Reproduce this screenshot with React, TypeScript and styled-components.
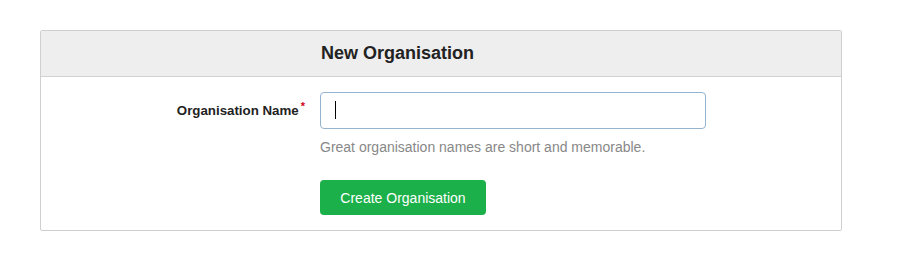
import styled, { createGlobalStyle } from 'styled-components';

const GlobalStyle = createGlobalStyle`
  body {
    margin: 0;
    background: #fff;
    font-family: "Liberation Sans", Arial, sans-serif;
    color: #222;
  }
`;

const App = () => {
  return (
    <>
      <GlobalStyle />
      <Panel>
        <PanelHead>
          <span />
          <Title>New Organisation</Title>
        </PanelHead>
        <PanelBody>
          <Label htmlFor="org-name">
            Organisation Name<Required>*</Required>
          </Label>
          <Field>
            <InputWrap>
              <Input id="org-name" type="text" />
              <Caret />
            </InputWrap>
            <Help>Great organisation names are short and memorable.</Help>
            <Submit type="button">Create Organisation</Submit>
          </Field>
        </PanelBody>
      </Panel>
    </>
  );
};

const Panel = styled.div`
  margin: 30px 0 0 40px;
  width: 802px;
  box-sizing: border-box;
  border: 1px solid #cfcfcf;
  border-radius: 2px;
  background: #fff;
`;

const PanelHead = styled.div`
  display: grid;
  grid-template-columns: 280px 1fr;
  align-items: center;
  height: 45px;
  background: #eeeeee;
  border-bottom: 1px solid #d2d2d2;
`;

const Title = styled.h2`
  margin: 0;
  font-size: 18px;
  font-weight: bold;
  color: #222;
`;

const PanelBody = styled.div`
  display: grid;
  grid-template-columns: 269px 1fr;
  column-gap: 10px;
  padding: 15px 0 15px;
`;

const Label = styled.label`
  display: flex;
  justify-content: flex-end;
  align-items: center;
  height: 37px;
  padding-right: 5px;
  font-size: 13.3px;
  font-weight: bold;
  color: #222;
`;

const Required = styled.sup`
  color: #d0021b;
  font-size: 11px;
  margin-left: 2px;
  align-self: flex-start;
  margin-top: 9px;
  line-height: 1;
`;

const Field = styled.div`
  display: flex;
  flex-direction: column;
  align-items: flex-start;
`;

const InputWrap = styled.div`
  position: relative;
`;

const Input = styled.input`
  display: block;
  width: 386px;
  height: 37px;
  box-sizing: border-box;
  border: 1px solid #94b3cf;
  border-radius: 4px;
  padding: 0 14px;
  font-size: 14px;
  font-family: inherit;
  outline: none;
`;

const Caret = styled.span`
  position: absolute;
  left: 15px;
  top: 9px;
  width: 1px;
  height: 18px;
  background: #000;
`;

const Help = styled.p`
  margin: 10px 0 0;
  font-size: 14px;
  line-height: 17px;
  color: #888;
`;

const Submit = styled.button`
  margin-top: 24px;
  height: 35px;
  width: 166px;
  padding: 0;
  border: none;
  border-radius: 4px;
  background: #1cb04a;
  color: #fff;
  font-size: 14px;
  font-family: inherit;
  cursor: pointer;
`;

export default App;
